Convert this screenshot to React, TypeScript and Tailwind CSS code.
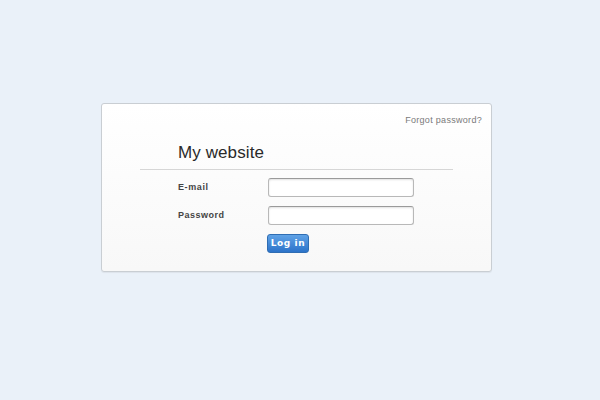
import React from 'react';

const App: React.FC = () => {
  return (
    <div className="w-[600px] h-[400px] bg-[#eaf1f9] pt-[103px] pl-[101px]" style={{ fontFamily: '"DejaVu Sans", sans-serif' }}>
      <div className="w-[391px] h-[169px] rounded-[3px] border border-[#c9ced3] bg-gradient-to-b from-white to-[#f8f8f8] shadow-[0_1px_1px_rgba(0,0,0,0.06)]">
        <div className="flex justify-end pr-[9px] pt-[12px] h-[24px]">
          <a className="text-[9px] text-[#7a7a7a] tracking-[0.3px] leading-none font-['Liberation_Sans',sans-serif]">Forgot password?</a>
        </div>
        <div className="mx-[38px] border-b border-[#d6d6d6] pl-[38px] pt-[16px] pb-[8px]">
          <h1 className="text-[17px] font-normal text-[#2a2a2a] leading-none tracking-[0.1px] font-['Liberation_Sans',sans-serif]">My website</h1>
        </div>
        <div className="pl-[76px] pt-[8px] flex flex-col gap-[9px]">
          <div className="flex items-center">
            <label className="w-[90px] text-[9px] font-bold text-[#444] tracking-[0.6px] font-['Liberation_Sans',sans-serif]">E-mail</label>
            <input className="w-[146px] h-[19px] rounded-[3px] border border-[#b8b8b8] border-t-[#9a9a9a] bg-white shadow-[inset_0_1px_2px_rgba(0,0,0,0.12)] outline-none" />
          </div>
          <div className="flex items-center">
            <label className="w-[90px] text-[9px] font-bold text-[#444] tracking-[0.5px] font-['Liberation_Sans',sans-serif]">Password</label>
            <input type="password" className="w-[146px] h-[19px] rounded-[3px] border border-[#b8b8b8] border-t-[#9a9a9a] bg-white shadow-[inset_0_1px_2px_rgba(0,0,0,0.12)] outline-none" />
          </div>
          <div className="flex pl-[89px]">
            <button className="w-[42px] h-[19px] rounded-[3px] border border-[#2f6db3] bg-gradient-to-b from-[#5fa2e6] to-[#2c73c9] text-white text-[9px] font-bold tracking-[0.6px] leading-none">Log in</button>
          </div>
        </div>
      </div>
    </div>
  );
};

export default App;
